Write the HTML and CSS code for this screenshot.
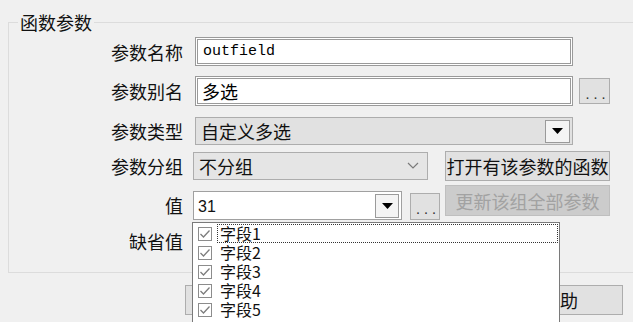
FILE: index.html
```html
<!DOCTYPE html>
<html lang="zh">
<head>
    <meta charset="UTF-8">
    <title>函数参数</title>
    <link rel="stylesheet" href="styles.css">
</head>
<body>
    <fieldset class="group">
        <legend>函数参数</legend>

        <div class="row row-name">
            <label class="cap">参数名称</label>
            <input class="edit mono" type="text" value="outfield">
        </div>

        <div class="row row-alias">
            <label class="cap">参数别名</label>
            <input class="edit" type="text" value="多选">
            <button class="dots dots-alias">. . .</button>
        </div>

        <div class="row row-type">
            <label class="cap">参数类型</label>
            <div class="select">
                <span>自定义多选</span>
                <span class="drop">
                    <svg width="11" height="6" viewBox="0 0 11 6"><path d="M0 0h11L5.5 6z" fill="#000"/></svg>
                </span>
            </div>
        </div>

        <div class="row row-group">
            <label class="cap">参数分组</label>
            <div class="combo">
                <span>不分组</span>
                <svg class="chev" width="12" height="7" viewBox="0 0 12 7"><path d="M1 1l5 5 5-5" fill="none" stroke="#7a7a7a" stroke-width="1.2"/></svg>
            </div>
            <button class="btn btn-open">打开有该参数的函数</button>
        </div>

        <div class="row row-value">
            <label class="cap cap-value">值</label>
            <div class="value">
                <span class="value-text">31</span>
                <span class="drop drop-value">
                    <svg width="11" height="6" viewBox="0 0 11 6"><path d="M0 0h11L5.5 6z" fill="#000"/></svg>
                </span>

                <ul class="list">
                    <li class="item"><svg class="chk" width="14" height="14" viewBox="0 0 14 14"><rect x="0.5" y="0.5" width="13" height="13" fill="#fff" stroke="#8c8c8c"/><path d="M2.5 7l3 3 6-6.5" fill="none" stroke="#7d7d7d" stroke-width="1.3"/></svg><span class="item-text focus">字段1</span></li>
                    <li class="item"><svg class="chk" width="14" height="14" viewBox="0 0 14 14"><rect x="0.5" y="0.5" width="13" height="13" fill="#fff" stroke="#8c8c8c"/><path d="M2.5 7l3 3 6-6.5" fill="none" stroke="#7d7d7d" stroke-width="1.3"/></svg><span class="item-text">字段2</span></li>
                    <li class="item"><svg class="chk" width="14" height="14" viewBox="0 0 14 14"><rect x="0.5" y="0.5" width="13" height="13" fill="#fff" stroke="#8c8c8c"/><path d="M2.5 7l3 3 6-6.5" fill="none" stroke="#7d7d7d" stroke-width="1.3"/></svg><span class="item-text">字段3</span></li>
                    <li class="item"><svg class="chk" width="14" height="14" viewBox="0 0 14 14"><rect x="0.5" y="0.5" width="13" height="13" fill="#fff" stroke="#8c8c8c"/><path d="M2.5 7l3 3 6-6.5" fill="none" stroke="#7d7d7d" stroke-width="1.3"/></svg><span class="item-text">字段4</span></li>
                    <li class="item"><svg class="chk" width="14" height="14" viewBox="0 0 14 14"><rect x="0.5" y="0.5" width="13" height="13" fill="#fff" stroke="#8c8c8c"/><path d="M2.5 7l3 3 6-6.5" fill="none" stroke="#7d7d7d" stroke-width="1.3"/></svg><span class="item-text">字段5</span></li>
                </ul>
            </div>
            <button class="dots dots-value">. . .</button>
            <button class="btn btn-update" disabled>更新该组全部参数</button>
        </div>

        <div class="row row-default">
            <label class="cap">缺省值</label>
        </div>
    </fieldset>

    <div class="actions">
        <button class="btn btn-action">确定</button>
        <button class="btn btn-action">取消</button>
        <button class="btn btn-action">帮助</button>
    </div>
</body>
</html>
```

FILE: styles.css
```css
body {
    margin: 0;
    background-color: #f0f0f0;
    font-family: "Noto Sans CJK SC", "Microsoft YaHei", sans-serif;
    font-size: 18px;
    color: #111;
    overflow: hidden;
    width: 633px;
    height: 322px;
}

.group {
    box-sizing: border-box;
    margin: 12px 0 0 8px;
    padding: 0;
    width: 625px;
    height: 261px;
    border: 1px solid #dcdcdc;
    border-right: none;
}

.group legend {
    margin-left: 9px;
    padding: 0 2px;
    line-height: 20px;
    height: 20px;
}

.row {
    display: flex;
    align-items: center;
}

.cap {
    width: 174px;
    text-align: right;
    margin-right: 12px;
    line-height: 20px;
    flex-shrink: 0;
}

.row-name {
    margin-top: 5px;
    height: 29px;
}

.row-alias {
    margin-top: 10px;
    height: 30px;
}

.row-type {
    margin-top: 11px;
    height: 28px;
}

.row-group {
    margin-top: 5px;
    height: 31px;
}

.row-value {
    margin-top: 4px;
    height: 35px;
    align-items: flex-start;
}

.row-default {
    margin-top: 12px;
    height: 18px;
}

/* text fields */
.edit {
    box-sizing: border-box;
    width: 378px;
    height: 100%;
    border: 3px double #9a9a9a;
    background: #fff;
    padding: 0 4px;
    font-family: "Noto Sans CJK SC", sans-serif;
    font-size: 18px;
    color: #000;
    outline: none;
}

.edit.mono {
    font-family: "Liberation Mono", monospace;
    font-size: 15px;
    padding-left: 5px;
}

.dots {
    box-sizing: border-box;
    border: 1px solid #adadad;
    background: #e1e1e1;
    font-family: "Liberation Mono", monospace;
    font-size: 10px;
    font-weight: bold;
    color: #333;
    padding: 10px 0 0;
    letter-spacing: -2px;
}

.dots-alias {
    margin-left: 6px;
    width: 31px;
    height: 26px;
}

/* dropdown list style select */
.select {
    box-sizing: border-box;
    width: 378px;
    height: 28px;
    border: 1px solid #adadad;
    background: #e1e1e1;
    display: flex;
    align-items: center;
    justify-content: space-between;
    padding: 0 2px 0 5px;
}

.drop {
    box-sizing: border-box;
    width: 25px;
    height: 23px;
    border: 1px solid #9a9a9a;
    background: #f4f4f4;
    display: flex;
    align-items: center;
    justify-content: center;
}

.combo {
    box-sizing: border-box;
    margin-left: -2px;
    width: 235px;
    height: 28px;
    border: 1px solid #adadad;
    background: #e5e5e5;
    display: flex;
    align-items: center;
    justify-content: space-between;
    padding: 0 8px 0 5px;
}

.btn {
    box-sizing: border-box;
    border: 1px solid #adadad;
    background: #e1e1e1;
    font-family: "Noto Sans CJK SC", sans-serif;
    font-size: 18px;
    color: #111;
    padding: 0;
    white-space: nowrap;
}

.btn-open {
    margin-left: 17px;
    width: 165px;
    height: 30px;
    overflow: visible;
}

/* value row */
.cap-value {
    margin-top: 10px;
}

.value {
    position: relative;
    box-sizing: border-box;
    margin: 6px 0 0 -2px;
    width: 209px;
    height: 29px;
    border: 1px solid #a0a0a0;
    background: #fff;
    display: flex;
    align-items: center;
    justify-content: space-between;
    padding: 0 2px 0 4px;
}

.value-text {
    font-family: "Liberation Sans", sans-serif;
    font-size: 16px;
    padding-top: 2px;
}

.drop-value {
    width: 24px;
    height: 24px;
}

.dots-value {
    margin: 8px 0 0 8px;
    width: 30px;
    height: 27px;
}

.btn-update {
    margin-left: 5px;
    width: 165px;
    height: 31px;
    background: #cccccc;
    border-color: #bfbfbf;
    color: #a2a2a2;
}

/* the open check list */
.list {
    position: absolute;
    top: 30px;
    left: -2px;
    box-sizing: border-box;
    width: 368px;
    height: 100px;
    margin: 0;
    padding: 1px 0 0;
    list-style: none;
    background: #fff;
    border: 1px solid #7a7a7a;
    border-bottom: none;
    overflow: hidden;
    z-index: 2;
}

.item {
    display: flex;
    align-items: center;
    height: 19px;
    font-size: 16px;
    line-height: 19px;
}

.chk {
    margin-left: 5px;
    flex-shrink: 0;
}

.item-text {
    flex: 1;
    margin: 0 1px 0 5px;
    padding-left: 2px;
    height: 19px;
    box-sizing: border-box;
    border: 1px dotted transparent;
    line-height: 17px;
}

.item-text.focus {
    border-color: #333;
}

/* bottom buttons */
.actions {
    display: flex;
    gap: 30px;
    margin: 12px 0 0 185px;
}

.btn-action {
    width: 126px;
    height: 30px;
}
```
